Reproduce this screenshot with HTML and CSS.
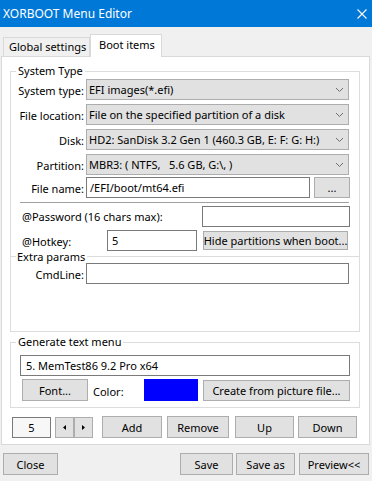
FILE: index.html
```html
<!DOCTYPE html>
<html>

<head>
  <meta charset="utf-8">
  <link rel="stylesheet" href="styles.css">
</head>

<body>

<div class="titlebar">
  <span class="titlebar-text">XORBOOT Menu Editor</span>
  <svg class="close-icon" width="10" height="10" viewBox="0 0 10 10">
    <path d="M0.5 0.5 L9.5 9.5 M9.5 0.5 L0.5 9.5" stroke="#fff" stroke-width="1.1" fill="none"/>
  </svg>
</div>

<div class="tabs">
  <div class="tab">Global settings</div>
  <div class="tab tab-active">Boot items</div>
</div>

<div class="panel">
  <fieldset class="group group-system">
    <legend class="group-legend">System Type</legend>

    <div class="row row-combo">
      <span class="lbl">System type:</span>
      <div class="combo"><span class="combo-text">EFI images(*.efi)</span><svg class="chev" width="7" height="4" viewBox="0 0 7 4"><path d="M0 0 L3.5 3.5 L7 0" stroke="#6d6d6d" fill="none"/></svg></div>
    </div>

    <div class="row row-combo">
      <span class="lbl">File location:</span>
      <div class="combo"><span class="combo-text">File on the specified partition of a disk</span><svg class="chev" width="7" height="4" viewBox="0 0 7 4"><path d="M0 0 L3.5 3.5 L7 0" stroke="#6d6d6d" fill="none"/></svg></div>
    </div>

    <div class="row row-combo">
      <span class="lbl">Disk:</span>
      <div class="combo"><span class="combo-text">HD2: SanDisk 3.2 Gen 1 (460.3 GB, E: F: G: H:)</span><svg class="chev" width="7" height="4" viewBox="0 0 7 4"><path d="M0 0 L3.5 3.5 L7 0" stroke="#6d6d6d" fill="none"/></svg></div>
    </div>

    <div class="row row-part">
      <span class="lbl">Partition:</span>
      <div class="combo"><span class="combo-text">MBR3: ( NTFS,   5.6 GB, G:\, )</span><svg class="chev" width="7" height="4" viewBox="0 0 7 4"><path d="M0 0 L3.5 3.5 L7 0" stroke="#6d6d6d" fill="none"/></svg></div>
    </div>

    <div class="row row-file">
      <span class="lbl">File name:</span>
      <div class="edit edit-file">/EFI/boot/mt64.efi</div>
      <div class="btn btn-browse">...</div>
    </div>

    <div class="sep"></div>

    <div class="row row-pass">
      <span class="lbl-pass">@Password (16 chars max):</span>
      <div class="edit edit-pass"></div>
    </div>

    <div class="row row-hotkey">
      <span class="lbl-hotkey">@Hotkey:</span>
      <div class="edit edit-hotkey">5</div>
      <div class="btn btn-hide">Hide partitions when boot...</div>
    </div>

    <div class="subhead">
      <span class="subhead-line subhead-line-short"></span>
      <span class="subhead-text">Extra params</span>
      <span class="subhead-line subhead-line-fill"></span>
    </div>

    <div class="row row-cmd">
      <span class="lbl">CmdLine:</span>
      <div class="edit edit-wide"></div>
    </div>
  </fieldset>

  <fieldset class="group group-menu">
    <legend class="group-legend">Generate text menu</legend>

    <div class="edit edit-menu">5. MemTest86 9.2 Pro x64</div>

    <div class="menu-tools">
      <div class="btn btn-font">Font...</div>
      <span class="lbl-color">Color:</span>
      <div class="swatch"></div>
      <div class="btn btn-picture">Create from picture file...</div>
    </div>
  </fieldset>

  <div class="item-bar">
    <div class="edit edit-index">5</div>
    <div class="spin">
      <div class="btn spin-btn">
        <svg width="3" height="5" viewBox="0 0 3 5"><path d="M3 0 L0 2.5 L3 5 Z" fill="#000"/></svg>
      </div>
      <div class="btn spin-btn">
        <svg width="3" height="5" viewBox="0 0 3 5"><path d="M0 0 L3 2.5 L0 5 Z" fill="#000"/></svg>
      </div>
    </div>
    <div class="btn btn-add">Add</div>
    <div class="btn btn-remove">Remove</div>
    <div class="btn btn-up">Up</div>
    <div class="btn btn-down">Down</div>
  </div>
</div>

<div class="footer">
  <div class="btn btn-close">Close</div>
  <div class="btn btn-save">Save</div>
  <div class="btn btn-saveas">Save as</div>
  <div class="btn btn-preview">Preview&lt;&lt;</div>
</div>

</body>

</html>
```

FILE: styles.css
```css
* {
  box-sizing: border-box;
}

html, body {
  margin: 0;
  width: 372px;
  height: 481px;
  overflow: hidden;
}

body {
  background: #f0f0f0;
  color: #000;
  font-family: "Noto Sans", "Open Sans", sans-serif;
  font-size: 11px;
}

.titlebar {
  display: flex;
  align-items: center;
  height: 27px;
  padding: 0 5px 0 3px;
  background: #0078d7;
  color: #fff;
  font-size: 12px;
}

.titlebar-text {
  flex: 1;
}

/* tabs */

.tabs {
  display: flex;
  align-items: flex-end;
  height: 22px;
  margin-top: 7px;
  padding-left: 3px;
}

.tab {
  width: 87px;
  height: 19px;
  padding-left: 5px;
  border: 1px solid #d9d9d9;
  border-bottom: none;
  background: #f0f0f0;
  line-height: 18px;
  white-space: nowrap;
}

.tab-active {
  position: relative;
  width: 72px;
  height: 23px;
  margin-bottom: -1px;
  padding-left: 8px;
  background: #fff;
  line-height: 20px;
}

.panel {
  width: 369px;
  height: 389px;
  margin-left: 1px;
  padding-left: 8px;
  border: 1px solid #d9d9d9;
  background: #fff;
}

/* group boxes */

.group {
  width: 350px;
  margin: 7px 0 0 0;
  padding: 1px 0 0 0;
  border: 1px solid #dcdcdc;
}

.group-legend {
  margin-left: 5px;
  padding: 0 2px;
  line-height: 14px;
}

.group-system {
  padding-bottom: 47px;
}

.group-menu {
  margin-top: 3px;
  padding-top: 6px;
  padding-bottom: 6px;
}

.row {
  display: flex;
  align-items: center;
  height: 21px;
  white-space: nowrap;
}

.row-combo {
  margin-bottom: 4px;
}

.row-part {
  margin-bottom: 2px;
}

.row-file {
  margin-bottom: 4px;
}

.row-pass {
  margin-bottom: 3px;
  padding-left: 11px;
}

.row-hotkey {
  padding-left: 11px;
}

.lbl {
  width: 73px;
  margin-right: 2px;
  text-align: right;
  padding-top: 2px;
}

.lbl-pass {
  width: 180px;
}

.lbl-hotkey {
  width: 85px;
  padding-top: 2px;
}

.combo {
  display: flex;
  align-items: center;
  width: 263px;
  height: 21px;
  padding: 0 5px 0 2px;
  border: 1px solid #adadad;
  background: #e1e1e1;
}

.combo-text {
  flex: 1;
  overflow: hidden;
  white-space: pre;
}

.chev {
  flex: none;
}

.edit {
  height: 21px;
  padding-left: 3px;
  border: 1px solid #7a7a7a;
  background: #fff;
  line-height: 19px;
  white-space: nowrap;
}

.edit-file {
  width: 224px;
}

.edit-pass {
  width: 148px;
}

.edit-hotkey {
  width: 90px;
  padding-left: 4px;
}

.edit-wide {
  width: 263px;
}

.edit-menu {
  width: 330px;
  margin-left: 9px;
  padding-left: 5px;
}

.sep {
  width: 329px;
  height: 1px;
  margin: 0 0 3px 9px;
  background: #a0a0a0;
}

.subhead {
  display: flex;
  align-items: center;
  height: 11px;
  margin: 0 -1px 1px -1px;
}

.subhead-line {
  height: 1px;
  background: #dcdcdc;
}

.subhead-line-short {
  width: 6px;
}

.subhead-line-fill {
  flex: 1;
}

.subhead-text {
  padding: 0 2px 0 1px;
}

/* buttons */

.btn {
  display: flex;
  align-items: center;
  justify-content: center;
  height: 21px;
  border: 1px solid #adadad;
  background: #e1e1e1;
  white-space: nowrap;
}

.btn-browse {
  width: 36px;
  margin-left: 4px;
}

.btn-hide {
  width: 145px;
  height: 19px;
  margin-left: 6px;
}

.menu-tools {
  display: flex;
  align-items: center;
  height: 22px;
  margin-top: 3px;
  padding-left: 11px;
}

.btn-font {
  width: 66px;
  height: 22px;
}

.lbl-color {
  width: 51px;
  margin-left: 5px;
  padding-top: 2px;
}

.swatch {
  width: 54px;
  height: 22px;
  background: #0000ff;
}

.btn-picture {
  width: 147px;
  margin-left: 5px;
}

.item-bar {
  display: flex;
  align-items: center;
  height: 22px;
  margin-top: 8px;
  margin-left: 2px;
}

.edit-index {
  width: 39px;
  padding-left: 0;
  background: #f7f7f7;
  text-align: center;
}

.spin {
  display: flex;
  margin-left: 4px;
}

.spin-btn {
  width: 19px;
  height: 21px;
}

.btn-add {
  width: 60px;
  height: 22px;
  margin-left: 9px;
}

.btn-remove {
  width: 62px;
  height: 22px;
  margin-left: 5px;
}

.btn-up {
  width: 59px;
  height: 22px;
  margin-left: 6px;
}

.btn-down {
  width: 59px;
  height: 22px;
  margin-left: 4px;
}

/* window buttons */

.footer {
  display: flex;
  align-items: center;
  margin-top: 8px;
  padding: 0 3px;
}

.footer .btn {
  height: 22px;
}

.btn-close {
  width: 55px;
  margin-right: auto;
}

.btn-save {
  width: 53px;
}

.btn-saveas {
  width: 59px;
  margin-left: 3px;
}

.btn-preview {
  width: 70px;
  margin-left: 4px;
}
```
